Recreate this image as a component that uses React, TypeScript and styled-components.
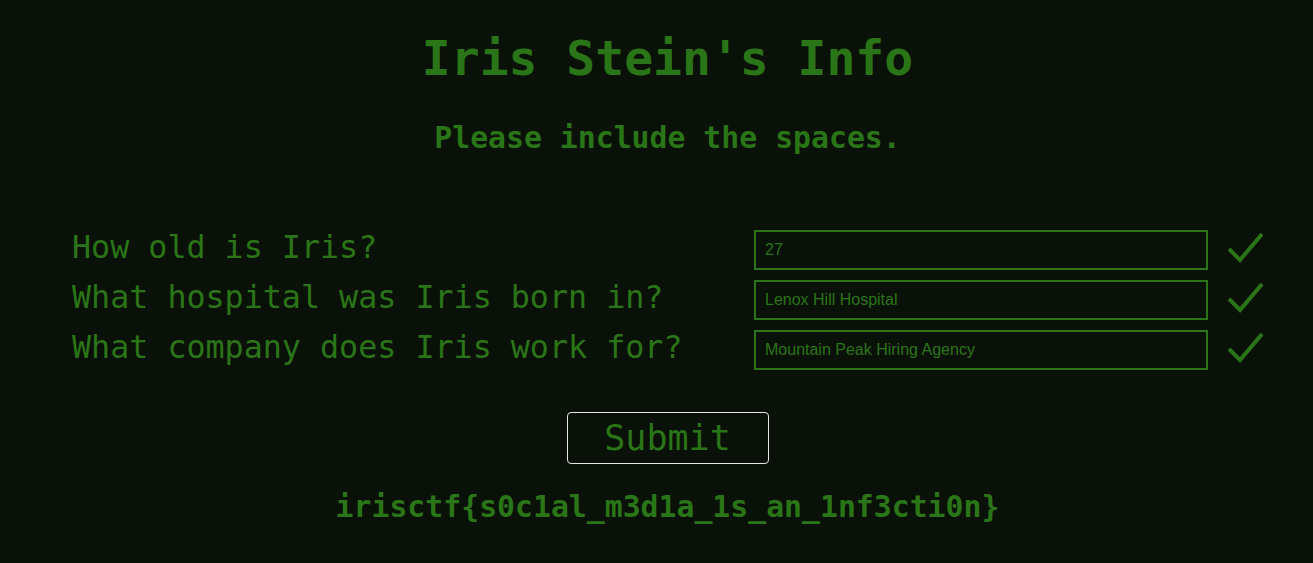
import React from "react";
import styled, { createGlobalStyle } from "styled-components";

const GREEN = "#2a7517";
const BG = "#0a1108";

const Global = createGlobalStyle`
  html, body {
    margin: 0;
    padding: 0;
    background: ${BG};
  }
  body {
    font-family: "DejaVu Sans Mono", "Liberation Mono", monospace;
    color: ${GREEN};
  }
`;

const Main = styled.main`
  width: 1191px;
  margin-left: 72px;
  padding-top: 30px;
  display: flex;
  flex-direction: column;
  align-items: center;
`;

const Title = styled.h1`
  margin: 0;
  font-size: 48px;
  line-height: 56px;
  font-weight: bold;
  color: ${GREEN};
`;

const Subtitle = styled.h2`
  margin: 34px 0 0;
  font-size: 29.8px;
  line-height: 36px;
  font-weight: bold;
  color: ${GREEN};
`;

const Form = styled.form`
  margin-top: 74px;
  width: 100%;
  display: flex;
  flex-direction: column;
  align-items: center;
`;

const Questions = styled.div`
  width: 100%;
  display: grid;
  grid-template-columns: 1fr 454px 55px;
  grid-auto-rows: 40px;
  row-gap: 10px;
  align-items: center;
`;

const Label = styled.label`
  box-sizing: border-box;
  height: 40px;
  padding: 0 0 6px 0;
  font-size: 31.7px;
  line-height: 34px;
  white-space: pre;
  color: ${GREEN};
`;

const Input = styled.input`
  box-sizing: border-box;
  width: 454px;
  height: 40px;
  margin: 0;
  padding: 0 9px;
  background: ${BG};
  border: 2px solid ${GREEN};
  border-radius: 0;
  outline: none;
  color: ${GREEN};
  font-family: "Liberation Sans", Arial, sans-serif;
  font-size: 16px;
`;

const Check = styled.div`
  padding-left: 20px;
  display: flex;
  align-items: center;
  height: 40px;
`;

const SubmitButton = styled.button`
  margin-top: 42px;
  box-sizing: border-box;
  width: 202px;
  height: 52px;
  padding: 0;
  background: ${BG};
  border: 1px solid #e8e8e8;
  border-radius: 4px;
  color: ${GREEN};
  font-family: "DejaVu Sans Mono", "Liberation Mono", monospace;
  font-size: 35px;
  line-height: 50px;
  cursor: pointer;
`;

const Flag = styled.p`
  margin: 25px 0 0;
  font-size: 29.8px;
  line-height: 36px;
  font-weight: bold;
  color: ${GREEN};
`;

const CheckIcon = () => (
  <svg width="35" height="40" viewBox="0 0 35 40" fill="none">
    <path
      d="M1 19 L12 30 L34 4"
      stroke={GREEN}
      strokeWidth="4"
      strokeLinecap="butt"
      strokeLinejoin="miter"
    />
  </svg>
);

const questions = [
  { q: "How old is Iris?", a: "27" },
  { q: "What hospital was Iris born in?", a: "Lenox Hill Hospital" },
  { q: "What company does Iris work for?", a: "Mountain Peak Hiring Agency" },
];

export default function App() {
  return (
    <>
      <Global />
      <Main>
        <Title>Iris Stein's Info</Title>
        <Subtitle>Please include the spaces.</Subtitle>
        <Form onSubmit={(e) => e.preventDefault()}>
          <Questions>
            {questions.map((item) => (
              <React.Fragment key={item.q}>
                <Label>{item.q}</Label>
                <Input defaultValue={item.a} />
                <Check>
                  <CheckIcon />
                </Check>
              </React.Fragment>
            ))}
          </Questions>
          <SubmitButton type="submit">Submit</SubmitButton>
        </Form>
        <Flag>irisctf{"{"}s0c1al_m3d1a_1s_an_1nf3cti0n{"}"}</Flag>
      </Main>
    </>
  );
}
